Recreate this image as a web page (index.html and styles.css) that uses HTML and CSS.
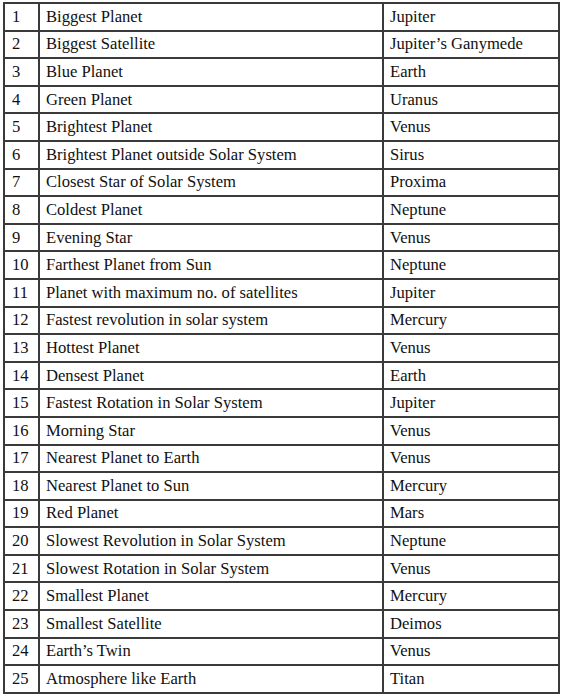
FILE: index.html
```html
<!DOCTYPE html>
<html>
<head>
<meta charset="utf-8">
<link rel="stylesheet" href="styles.css">
</head>
<body>
<table class="facts">
<colgroup><col class="c-num"><col class="c-name"><col class="c-val"></colgroup>
<tbody>
<tr><td>1</td><td>Biggest Planet</td><td>Jupiter</td></tr>
<tr><td>2</td><td>Biggest Satellite</td><td>Jupiter’s Ganymede</td></tr>
<tr><td>3</td><td>Blue Planet</td><td>Earth</td></tr>
<tr><td>4</td><td>Green Planet</td><td>Uranus</td></tr>
<tr><td>5</td><td>Brightest Planet</td><td>Venus</td></tr>
<tr><td>6</td><td>Brightest Planet outside Solar System</td><td>Sirus</td></tr>
<tr><td>7</td><td>Closest Star of Solar System</td><td>Proxima</td></tr>
<tr><td>8</td><td>Coldest Planet</td><td>Neptune</td></tr>
<tr><td>9</td><td>Evening Star</td><td>Venus</td></tr>
<tr><td>10</td><td>Farthest Planet from Sun</td><td>Neptune</td></tr>
<tr><td>11</td><td>Planet with maximum no. of satellites</td><td>Jupiter</td></tr>
<tr><td>12</td><td>Fastest revolution in solar system</td><td>Mercury</td></tr>
<tr><td>13</td><td>Hottest Planet</td><td>Venus</td></tr>
<tr><td>14</td><td>Densest Planet</td><td>Earth</td></tr>
<tr><td>15</td><td>Fastest Rotation in Solar System</td><td>Jupiter</td></tr>
<tr><td>16</td><td>Morning Star</td><td>Venus</td></tr>
<tr><td>17</td><td>Nearest Planet to Earth</td><td>Venus</td></tr>
<tr><td>18</td><td>Nearest Planet to Sun</td><td>Mercury</td></tr>
<tr><td>19</td><td>Red Planet</td><td>Mars</td></tr>
<tr><td>20</td><td>Slowest Revolution in Solar System</td><td>Neptune</td></tr>
<tr><td>21</td><td>Slowest Rotation in Solar System</td><td>Venus</td></tr>
<tr><td>22</td><td>Smallest Planet</td><td>Mercury</td></tr>
<tr><td>23</td><td>Smallest Satellite</td><td>Deimos</td></tr>
<tr><td>24</td><td>Earth’s Twin</td><td>Venus</td></tr>
<tr><td>25</td><td>Atmosphere like Earth</td><td>Titan</td></tr>
</tbody>
</table>
</body>
</html>
```
FILE: styles.css
```css
html, body {
  background: #ffffff;
}
body {
  margin: 2px 0 0 3px;
  font-family: "Liberation Serif", "Times New Roman", serif;
  font-size: 16.6px;
  color: #111111;
}
.facts {
  border-collapse: collapse;
  width: 555px;
  table-layout: fixed;
}
.c-num { width: 35px; }
.c-name { width: 344px; }
.c-val { width: 176px; }
.facts td {
  border: 2px solid #3a3a3a;
  height: 27.6px;
  padding: 0 0 0 6px;
  box-sizing: border-box;
  vertical-align: middle;
  line-height: 18px;
  white-space: nowrap;
  font-family: "Liberation Serif", "Times New Roman", serif;
}
.facts td:first-child {
  padding-left: 7px;
}
```
